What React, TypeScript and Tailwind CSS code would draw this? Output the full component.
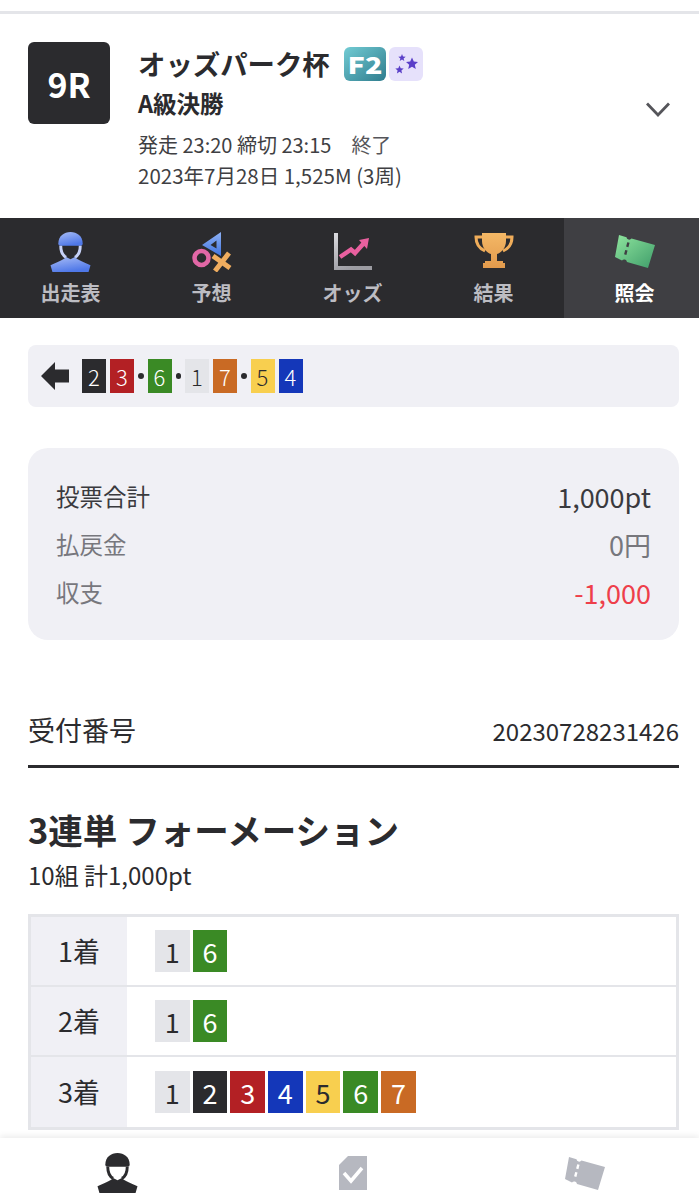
const chipColors: Record<number, string> = {
  1: "bg-[#e4e5e9] text-[#2b2b2e]",
  2: "bg-[#2b2b2e] text-white",
  3: "bg-[#b32024] text-white",
  4: "bg-[#1437b9] text-white",
  5: "bg-[#f8cf4f] text-[#2b2b2e]",
  6: "bg-[#3a8a25] text-white",
  7: "bg-[#c96a24] text-white",
};

const SmallChip = ({ n }: { n: number }) => (
  <span className={`flex h-[34px] w-[24px] items-center justify-center text-[22px] font-light leading-none ${chipColors[n]}`}>{n}</span>
);

const Chip = ({ n }: { n: number }) => (
  <span className={`flex h-[42px] w-[34.5px] items-center justify-center text-[27px] font-normal leading-none ${chipColors[n]}`}>{n}</span>
);

const Dot = () => <span className="h-[5.5px] w-[5.5px] rounded-full bg-[#2b2b2e]" />;

const helmet = "M8 12C8 4 14 0 20.5 0S33 4 33 12Q33 14 31 14H10Q8 14 8 12Z";
const straps = "M10.5 14C10.5 20 12.5 24 16 26M30.5 14C30.5 20 28.5 24 25 26";
const shoulders = "M0 34C6 31 13 29 16 25.5L20.5 28L25 25.5C28 29 35 31 41 34L39 41H2Z";

const RiderIcon = ({ fill, strapColor, className }: { fill: string; strapColor: string; className: string }) => (
  <svg viewBox="0 0 41 41" className={className}>
    <defs>
      <linearGradient id="rider" x1="0" y1="0" x2="0.4" y2="1">
        <stop offset="0" stopColor="#a9bdf6" />
        <stop offset="1" stopColor="#4f78e8" />
      </linearGradient>
    </defs>
    <path d={helmet} fill={fill} />
    <path d={straps} fill="none" stroke={strapColor} strokeWidth="3" />
    <path d={shoulders} fill={fill} />
  </svg>
);

const TicketIcon = ({ fill, gap, className }: { fill: string; gap: string; className: string }) => (
  <svg viewBox="0 0 41 33" className={className}>
    <defs>
      <linearGradient id="ticket" x1="0" y1="0" x2="1" y2="1">
        <stop offset="0" stopColor="#8fe59e" />
        <stop offset="1" stopColor="#3f9d6a" />
      </linearGradient>
    </defs>
    <path fill={fill} d="M5 0L12.5 2.2A2.8 2.8 0 0 0 17.5 3.6L41 10L34 33L13 27A2.8 2.8 0 0 0 8 25.5L1 22Z" />
    <path d="M14.4 7.500L11 20.500" fill="none" stroke={gap} strokeWidth="2.400" strokeDasharray="4.500 3.500" />
  </svg>
);

const Tab = ({ label, active, children }: { label: string; active?: boolean; children: React.ReactNode }) => (
  <div className={`flex flex-col items-center ${active ? "bg-[#3f3f43] text-white" : "text-[#bcbcc2]"}`}>
    <div className="flex h-[56px] items-end justify-center">{children}</div>
    <span className="mt-[7px] text-[20px] font-bold leading-[24px]">{label}</span>
  </div>
);

const SummaryRow = ({ label, value, labelClass, valueClass }: { label: string; value: string; labelClass: string; valueClass: string }) => (
  <div className="flex h-[48px] items-center justify-between">
    <span className={`text-[23.5px] ${labelClass}`}>{label}</span>
    <span className={`text-[27px] ${valueClass}`}>{value}</span>
  </div>
);

const FormationRow = ({ label, nums, last }: { label: string; nums: number[]; last?: boolean }) => (
  <div className={`flex h-[70px] ${last ? "" : "border-b-2 border-[#e4e5e9]"}`}>
    <div className="flex w-[96px] items-center justify-center bg-[#f0f0f5] text-[27px]">{label}</div>
    <div className="flex items-center gap-[3.2px] pl-[28px]">
      {nums.map((n) => (
        <Chip key={n} n={n} />
      ))}
    </div>
  </div>
);

export default function App() {
  return (
    <div className="relative flex h-[1200px] w-[699px] flex-col overflow-hidden bg-white font-['Noto_Sans_CJK_JP',sans-serif] text-[#2b2b2e]">
      <div className="mt-[11px] h-[3px] w-full bg-[#e4e5e9]" />

      <header className="relative flex h-[204px] gap-[28px] px-[28px] pt-[28px]">
        <div className="flex h-[82px] w-[82px] items-center justify-center rounded-[6px] bg-[#2b2b2e] text-[34px] font-bold text-white">9R</div>
        <div>
          <div className="flex h-[44px] items-center">
            <h1 className="text-[27.4px] font-bold leading-none">オッズパーク杯</h1>
            <span className="ml-[14px] flex h-[34px] w-[42px] items-center justify-center rounded-[6px] bg-gradient-to-br from-[#72ccd4] to-[#2f7d8e] text-[23px] font-black leading-none text-white">
              <span className="scale-x-[1.25]">F2</span>
            </span>
            <span className="ml-[3px] flex h-[34px] w-[34px] items-center justify-center rounded-[6px] bg-[#e6e1fb]">
              <svg viewBox="0 0 34 34" className="h-[34px] w-[34px]" fill="#5a3fc8">
                <path d="M13 7L14 9.500L16.700 9.700L14.600 11.400L15.300 14L13 12.600L10.700 14L11.400 11.400L9.300 9.700L12 9.500Z" />
                <path d="M23 10.500L24.800 14.500L29 14.900L25.800 17.700L26.800 22L23 19.700L19.200 22L20.200 17.700L17 14.900L21.200 14.500Z" />
                <path d="M10.500 18.500L11.700 21.300L14.700 21.600L12.400 23.500L13.100 26.400L10.500 24.800L7.900 26.400L8.600 23.500L6.300 21.600L9.300 21.300Z" />
              </svg>
            </span>
          </div>
          <div className="text-[23.5px] font-bold leading-[34px]">A級決勝</div>
          <div className="mt-[9px] text-[20px] leading-[31px] text-[#3f3f43]">発走 23:20 締切 23:15<span className="ml-[20px] text-[#55555a]">終了</span></div>
          <div className="text-[20.5px] leading-[31px] text-[#3f3f43]">2023年7月28日 1,525M (3周)</div>
        </div>
        <svg viewBox="0 0 24 15" className="absolute left-[646px] top-[88px] h-[15px] w-[24px]" fill="none" stroke="#55555a" strokeWidth="2.8">
          <path d="M1 1.500L12 13L23 1.500" />
        </svg>
      </header>

      <div className="h-[100px] shrink-0 overflow-hidden bg-[#2b2b2e]">
        <nav className="grid h-[100px] w-[705px] grid-cols-5">
          <Tab label="出走表">
            <RiderIcon fill="url(#rider)" strapColor="#c7d2f8" className="mb-[2px] h-[40px] w-[41px]" />
          </Tab>
          <Tab label="予想">
            <svg viewBox="0 0 40 40" className="mb-[2px] h-[40px] w-[40px]">
              <defs>
                <linearGradient id="tri" x1="0" y1="0" x2="0" y2="1">
                  <stop offset="0" stopColor="#8fb2f5" />
                  <stop offset="1" stopColor="#3f73df" />
                </linearGradient>
              </defs>
              <path fillRule="evenodd" d="M29 0V24L10 13ZM24.500 8.500L18.500 13L24.500 16.500Z" fill="url(#tri)" />
              <circle cx="9.500" cy="26" r="7" fill="none" stroke="#e267a6" strokeWidth="4.500" />
              <path d="M23 39L37 21M21 24L38 36" fill="none" stroke="#f0ad5f" strokeWidth="5" />
            </svg>
          </Tab>
          <Tab label="オッズ">
            <svg viewBox="0 0 38 38" className="mb-[3px] h-[38px] w-[38px]">
              <defs>
                <linearGradient id="axis" x1="0" y1="0" x2="0.400" y2="1">
                  <stop offset="0" stopColor="#dcdce0" />
                  <stop offset="1" stopColor="#9c9ca2" />
                </linearGradient>
              </defs>
              <path d="M0 0H4V33H38V37H0Z" fill="url(#axis)" />
              <path d="M6 24L17 16.500L21 20L30 10" fill="none" stroke="#e9609f" strokeWidth="4.500" />
              <path d="M25 7L35 5L33 16Z" fill="#e9609f" />
            </svg>
          </Tab>
          <Tab label="結果">
            <svg viewBox="0 0 40 36" className="mb-[5px] h-[36px] w-[40px]">
              <defs>
                <linearGradient id="cup" x1="0" y1="0" x2="0" y2="1">
                  <stop offset="0" stopColor="#f4b866" />
                  <stop offset="1" stopColor="#e29a4c" />
                </linearGradient>
              </defs>
              <path d="M8 0H32V8C32 15 27 20 23 21V28H29V30H31V35H9V30H11V28H17V21C13 20 8 15 8 8Z" fill="url(#cup)" />
              <path d="M8 4H2Q2 14 11 18M32 4H38Q38 14 29 18" fill="none" stroke="#f0ad5a" strokeWidth="3" />
            </svg>
          </Tab>
          <Tab label="照会" active>
            <TicketIcon fill="url(#ticket)" gap="#3f3f43" className="mb-[6px] h-[33px] w-[41px]" />
          </Tab>
        </nav>
      </div>

      <main className="min-h-0 flex-1 overflow-hidden pl-[28px] pr-[20px] pt-[27px]">
        <div className="flex h-[62px] items-center rounded-[8px] bg-[#f0f0f5] pl-[13px]">
          <svg viewBox="0 0 28 28" className="mr-[13px] h-[28px] w-[28px]" fill="#2b2b2e">
            <path d="M14 0V7.500H28V20.500H14V28L0 14Z" />
          </svg>
          <div className="flex items-center gap-[4px]">
            <SmallChip n={2} />
            <SmallChip n={3} />
            <Dot />
            <SmallChip n={6} />
            <Dot />
            <SmallChip n={1} />
            <SmallChip n={7} />
            <Dot />
            <SmallChip n={5} />
            <SmallChip n={4} />
          </div>
        </div>

        <section className="mt-[41px] h-[192px] rounded-[20px] bg-[#f0f0f5] px-[28px] pt-[25px]">
          <SummaryRow label="投票合計" value="1,000pt" labelClass="text-[#3a3a3e]" valueClass="text-[#3a3a3e]" />
          <SummaryRow label="払戻金" value="0円" labelClass="text-[#77777d]" valueClass="text-[#77777d]" />
          <SummaryRow label="収支" value="-1,000" labelClass="text-[#77777d]" valueClass="text-[#ee3f4a]" />
        </section>

        <div className="mt-[65px] flex h-[63px] items-center justify-between border-b-[3px] border-[#2b2b2e] pb-[9px]">
          <span className="text-[27px]">受付番号</span>
          <span className="text-[24px]">20230728231426</span>
        </div>

        <h2 className="mt-[36px] text-[34.5px] font-bold leading-[50px]">3連単 フォーメーション</h2>
        <p className="mt-[1px] text-[24px] leading-[40px]">10組 計1,000pt</p>

        <div className="mt-[19px] border-[3px] border-[#e4e5e9]">
          <FormationRow label="1着" nums={[1, 6]} />
          <FormationRow label="2着" nums={[1, 6]} />
          <FormationRow label="3着" nums={[1, 2, 3, 4, 5, 6, 7]} last />
        </div>
      </main>

      <footer className="flex h-[62px] shrink-0 items-center bg-white pt-[8px] shadow-[0_-2px_6px_rgba(0,0,0,0.08)]">
        <div className="flex w-[235px] justify-center">
          <RiderIcon fill="#2b2b2e" strapColor="#2b2b2e" className="h-[40px] w-[41px]" />
        </div>
        <div className="flex w-[235px] justify-center">
          <svg viewBox="0 0 28 34" className="h-[34px] w-[28px]">
            <path d="M9 0H28V34H0V9Z" fill="#b6b8c0" />
            <path d="M5 17L12 25L23 12" fill="none" stroke="white" strokeWidth="3.500" />
          </svg>
        </div>
        <div className="flex w-[229px] justify-center">
          <TicketIcon fill="#b6b8c0" gap="white" className="h-[33px] w-[41px]" />
        </div>
      </footer>
    </div>
  );
}
